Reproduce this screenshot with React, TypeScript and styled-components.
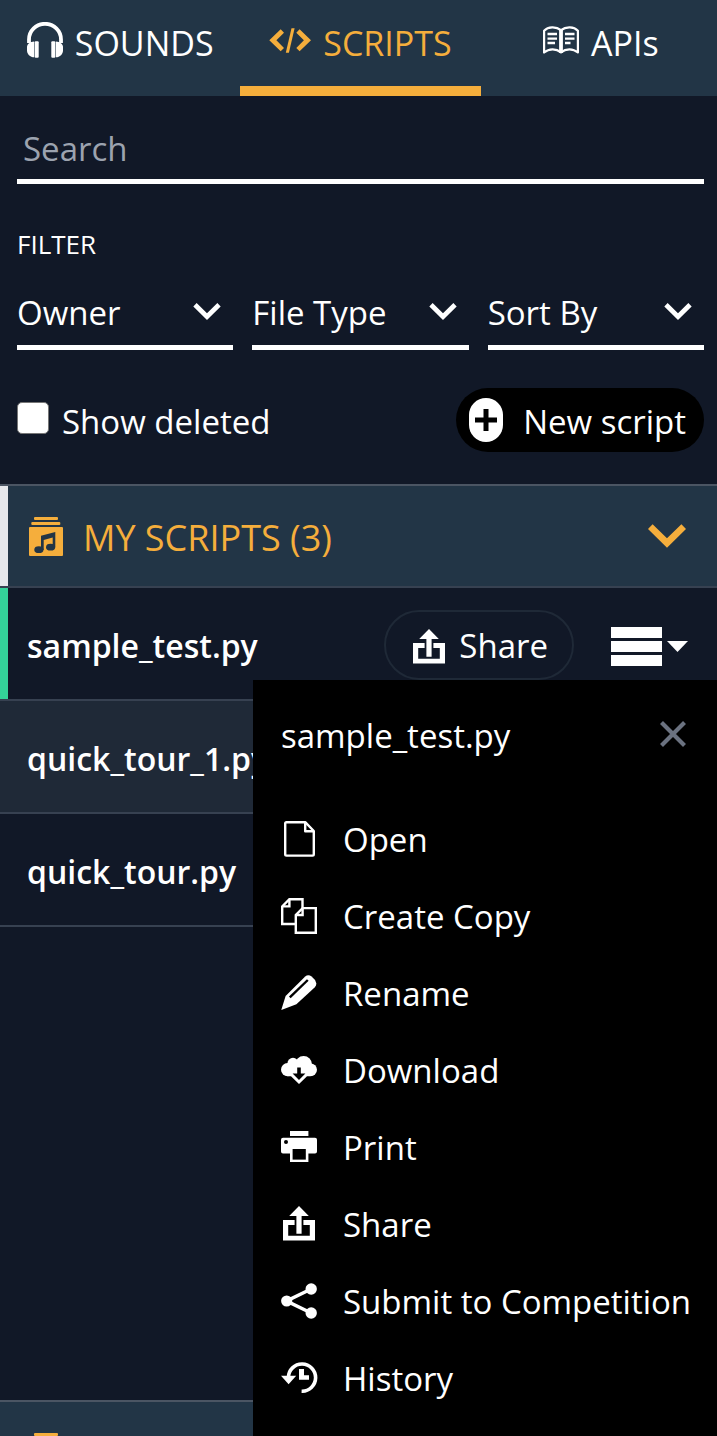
import React from 'react';
import styled, { createGlobalStyle } from 'styled-components';

const color = {
  page: '#111827',
  band: '#223546',
  amber: '#f5ae3c',
  rowAlt: '#1f2937',
  line: '#374151',
  lineTop: '#4b5563',
  muted: '#6b7280',
  placeholder: '#9ca3af',
  green: '#34d399',
};

const GlobalStyle = createGlobalStyle`
  *, *::before, *::after { box-sizing: border-box; }
  body {
    margin: 0;
    background: ${color.page};
    color: #fff;
    font-family: "Open Sans", "Noto Sans", sans-serif;
    font-size: 33px;
    line-height: 48px;
  }
  button, input, select { font: inherit; color: inherit; margin: 0; }
  button { border: 0; padding: 0; background: none; cursor: pointer; white-space: nowrap; }
  svg { display: block; flex: none; }
`;

const Page = styled.div`
  position: relative;
  display: flex;
  flex-direction: column;
  height: 100vh;
  overflow: hidden;
`;

const Tabs = styled.nav`
  display: grid;
  grid-template-columns: repeat(3, 1fr);
  flex: none;
  margin-right: -4px;
  background: ${color.band};
`;

const Tab = styled.button<{ $active?: boolean }>`
  display: flex;
  align-items: center;
  justify-content: center;
  gap: 12px;
  height: 96px;
  border-bottom: 10px solid ${(p) => (p.$active ? color.amber : 'transparent')};
  color: ${(p) => (p.$active ? color.amber : '#fff')};
  font-size: 34px;
  svg { margin-bottom: 6px; }
`;

const Controls = styled.div`
  flex: none;
  padding: 23px 13px 32px 17px;
`;

const SearchInput = styled.input`
  display: block;
  width: 100%;
  height: 65px;
  padding: 0 6px 2px;
  border: 0;
  border-bottom: 5px solid #fff;
  border-radius: 0;
  background: transparent;
  outline: none;
  &::placeholder { color: ${color.placeholder}; opacity: 1; }
`;

const FilterTitle = styled.div`
  margin: 40px 0 16px;
  font-size: 26px;
  line-height: 40px;
`;

const Filters = styled.div`
  display: grid;
  grid-template-columns: repeat(3, minmax(0, 1fr));
  gap: 19px;
`;

const SelectBox = styled.div`
  position: relative;
  border-bottom: 5px solid #fff;
  svg {
    position: absolute;
    top: 23px;
    right: 12px;
    pointer-events: none;
  }
`;

const Select = styled.select`
  display: block;
  width: 100%;
  height: 65px;
  padding: 0;
  border: 0;
  background: transparent;
  appearance: none;
  outline: none;
`;

const ActionsRow = styled.div`
  display: flex;
  align-items: center;
  justify-content: space-between;
  margin-top: 38px;
`;

const CheckLabel = styled.label`
  display: flex;
  align-items: center;
  gap: 13px;
  padding-top: 4px;
`;

const Checkbox = styled.input`
  appearance: none;
  width: 32px;
  height: 32px;
  margin-bottom: 8px;
  border: 1px solid #767676;
  border-radius: 5px;
  background: #fff;
`;

const NewScript = styled.button`
  display: flex;
  align-items: center;
  gap: 20px;
  height: 64px;
  padding: 4px 18px 0 13px;
  border-radius: 32px;
  background: #000;
`;

const PlusPill = styled.span`
  display: flex;
  align-items: center;
  justify-content: center;
  width: 34px;
  height: 44px;
  margin-bottom: 4px;
  border-radius: 17px;
  background: #fff;
`;

const SectionHeader = styled.button<{ $open?: boolean }>`
  display: flex;
  align-items: center;
  flex: none;
  gap: 20px;
  width: 100%;
  height: 104px;
  padding: 0 31px 0 29px;
  border-top: 2px solid ${color.lineTop};
  border-bottom: 2px solid ${color.line};
  background: ${color.band};
  box-shadow: ${(p) => (p.$open ? 'inset 8px 0 0 #e5e7eb' : 'none')};
  color: ${color.amber};
  font-size: 36px;
  text-align: left;
`;

const SectionTitle = styled.span`
  flex: 1;
  padding-top: 4px;
`;

const List = styled.ul`
  flex: 1;
  min-height: 0;
  margin: 0;
  padding: 0;
  list-style: none;
`;

const Row = styled.li<{ $alt?: boolean; $current?: boolean }>`
  display: flex;
  align-items: center;
  height: 113px;
  padding: 2px 29px 0 27px;
  border-bottom: 2px solid ${color.line};
  background: ${(p) => (p.$alt ? color.rowAlt : color.page)};
  box-shadow: ${(p) => (p.$current ? `inset 8px 0 0 ${color.green}` : 'none')};
`;

const FileName = styled.span`
  flex: 1;
  padding-top: 2px;
  font-size: 32px;
  font-weight: 600;
`;

const ShareButton = styled.button`
  display: flex;
  align-items: center;
  gap: 14px;
  height: 70px;
  padding: 3px 24px 0 27px;
  border: 2px solid ${color.rowAlt};
  border-radius: 35px;
`;

const MenuButton = styled.button`
  display: flex;
  align-items: center;
  gap: 5px;
  margin-left: 37px;
  padding-top: 3px;
`;

const NextSection = styled.div`
  flex: 0 0 36px;
  overflow: hidden;
`;

const Anchor = styled.div`
  position: relative;
  flex: none;
  height: 0;
`;

const Menu = styled.div`
  position: absolute;
  z-index: 1;
  top: 92px;
  right: 0;
  width: 464px;
  padding: 28px 0 20px;
  background: #000;
`;

const MenuHeader = styled.div`
  display: flex;
  align-items: center;
  justify-content: space-between;
  height: 56px;
  margin-bottom: 37px;
  padding: 0 31px 0 28px;
`;

const CloseButton = styled.button`
  padding-bottom: 4px;
`;

const MenuItem = styled.button`
  display: flex;
  align-items: center;
  gap: 26px;
  width: 100%;
  height: 77px;
  padding-left: 28px;
  text-align: left;
`;

const IconSlot = styled.span`
  display: flex;
  justify-content: center;
  flex: none;
  width: 36px;
  padding-bottom: 2px;
`;

const Headphones = () => (
  <svg width="36" height="36" viewBox="0 0 36 36" fill="currentColor">
    <path d="M2 21V17.5A16 15.7 0 0 1 34 17.5V21" fill="none" stroke="currentColor" strokeWidth="3.8" />
    <path d="M7.2 19.6V35.3C3 35.3 0 32 0 28.5V25C0 22.5 3 19.6 7.2 19.6Z" />
    <path d="M28.8 19.6V35.3C33 35.3 36 32 36 28.5V25C36 22.5 33 19.6 28.8 19.6Z" />
    <rect x="7.7" y="19.2" width="4" height="16.6" rx="1" />
    <rect x="24.3" y="19.2" width="4" height="16.6" rx="1" />
  </svg>
);

const Code = () => (
  <svg width="42" height="25" viewBox="0 0 42 25" fill="currentColor">
    <path d="M11.7 1.3 15 4.7 7.4 12.3 15 20 11.7 23.3.3 12.3Z" />
    <path d="M22.5.3H25.6L19.9 24.7H16.8Z" />
    <path d="M30.6 1.3 27.3 4.7 34.9 12.3 27.3 20 30.6 23.3 42 12.3Z" />
  </svg>
);

const Book = () => (
  <svg width="36" height="28" viewBox="0 0 36 28" fill="none" stroke="currentColor">
    <path d="M1.1 26.5V4.8C5 .5 13 .2 18 4.2 23 .2 31 .5 34.9 4.8V26.5C30 22.3 23 22.3 18 26.3 13 22.3 6 22.3 1.1 26.5Z" strokeWidth="2.2" strokeLinejoin="round" />
    <path d="M18 4V27" strokeWidth="3.8" />
    <path d="M4.5 8H14M4.5 12.6H14M4.5 17H12M22 8H31.5M22 12.6H31.5M22 17H27.5" strokeWidth="2.4" />
  </svg>
);

const Chevron = ({ width }: { width: number }) => (
  <svg width={width} height={Math.round((width * 17.4) / 28)} viewBox="0 0 28 17.4" fill="currentColor">
    <path d="M3.4 0 14 10.4 24.6 0 28 3.5 14 17.4 0 3.5Z" />
  </svg>
);

const Plus = () => (
  <svg width="22" height="22" viewBox="0 0 22 22">
    <path d="M11 0V22M0 11H22" stroke="#000" strokeWidth="5" />
  </svg>
);

const ScriptStack = () => (
  <svg width="34" height="39" viewBox="0 0 34 39" fill="currentColor">
    <rect x="5" y="0" width="24" height="3" rx="1" />
    <rect x="2.3" y="5" width="29" height="3" rx="1" />
    <rect x="0" y="10" width="34" height="29" rx="1" />
    <g fill={color.band}>
      <path d="M12 18.7 26.3 15V30H23.7V20.4L14.7 23V33H12Z" />
      <ellipse cx="9.9" cy="32.7" rx="4.6" ry="3.4" />
      <ellipse cx="21.6" cy="30.2" rx="4.6" ry="3.4" />
    </g>
  </svg>
);

const ShareUp = () => (
  <svg width="32" height="35" viewBox="0 0 32 35" fill="currentColor">
    <path d="M16 0 25.8 10H18.6V27.8H13.4V10H6.2Z" />
    <path d="M0 14H11.6V19H5.2V29.8H26.8V19H20.4V14H32V34.6H0Z" />
  </svg>
);

const Burger = () => (
  <svg width="51" height="39" viewBox="0 0 51 39" fill="currentColor">
    <path d="M0 0H51V11H0ZM0 14H51V25H0ZM0 28H51V39H0Z" />
  </svg>
);

const Caret = () => (
  <svg width="21" height="11" viewBox="0 0 21 11" fill="currentColor">
    <path d="M0 0H21L10.5 11Z" />
  </svg>
);

const Close = () => (
  <svg width="26" height="26" viewBox="0 0 26 26">
    <path d="M1.5 1.5 24.5 24.5M24.5 1.5 1.5 24.5" stroke={color.muted} strokeWidth="4.2" />
  </svg>
);

const FileIcon = () => (
  <svg width="31" height="36" viewBox="0 0 31 36" fill="none" stroke="currentColor" strokeWidth="2.4" strokeLinejoin="round">
    <path d="M2.5 1.2H21.2L29.8 10V33.3Q29.8 34.6 28.5 34.6H2.5Q1.2 34.6 1.2 33.3V2.5Q1.2 1.2 2.5 1.2Z" />
    <path d="M21.2 1.2V10.2H29.8" />
  </svg>
);

const CopyIcon = () => (
  <svg width="36" height="36" viewBox="0 0 36 36" fill="none" stroke="currentColor" strokeWidth="2.4">
    <path d="M14 26H1.2V8.4L8.4 1.2H21.5V10" />
    <path d="M8.4 1.2V8.4H1.2" />
    <path d="M14.8 34.7V17L21.6 10.1H34.8V34.7Z" />
    <path d="M21.6 10.1V17H14.8" />
  </svg>
);

const Pencil = () => (
  <svg width="36" height="36" viewBox="0 0 36 36" fill="currentColor">
    <path d="M.3 35 4.6 21 24.2 1.6Q27 -.8 30.6 1.4 34.4 4.2 35.3 8.2 35.5 10.6 33.6 12.4L15.4 29.2Z" />
    <path d="M8.8 22.4 26.8 5" fill="none" stroke="#000" strokeWidth="2.4" />
  </svg>
);

const CloudDown = () => (
  <svg width="36" height="28" viewBox="0 0 36 28" fill="currentColor">
    <circle cx="6.6" cy="13.6" r="6.6" />
    <circle cx="12" cy="7.4" r="5.6" />
    <circle cx="22.6" cy="8.4" r="8.4" />
    <circle cx="29.6" cy="13.8" r="6.4" />
    <path d="M6.6 8H29V20.2H26L18 28 10 20.2H6.6Z" />
    <path d="M16.2 11.4H19.8V17.6H24.4L18 24 11.6 17.6H16.2Z" fill="#000" />
  </svg>
);

const Printer = () => (
  <svg width="36" height="31" viewBox="0 0 36 31" fill="currentColor">
    <rect x="9" y="0" width="18.4" height="5" />
    <path d="M2 6.8H34Q36 6.8 36 8.8V20.6Q36 22.6 34 22.6H27.4V31H9V22.6H2Q0 22.6 0 20.6V8.8Q0 6.8 2 6.8Z" />
    <circle cx="5" cy="11" r="2" fill="#000" />
    <rect x="11.6" y="18" width="13.2" height="10.6" fill="#000" />
  </svg>
);

const Nodes = () => (
  <svg width="36" height="36" viewBox="0 0 36 36" fill="currentColor">
    <path d="M30.2 6 5.6 18 30.2 30" fill="none" stroke="currentColor" strokeWidth="3.6" />
    <circle cx="5.7" cy="18" r="5.6" />
    <circle cx="30.2" cy="6" r="5.7" />
    <circle cx="30.2" cy="30" r="5.7" />
  </svg>
);

const HistoryIcon = () => (
  <svg width="37" height="31" viewBox="0 0 37 31" fill="currentColor">
    <path d="M7.4 15.5A13.6 13.6 0 1 1 20.6 29.2" fill="none" stroke="currentColor" strokeWidth="3.6" />
    <path d="M0 13.8H15.2L7.6 22.3Z" />
    <path d="M18 7H23V13.3H28V17.8H18Z" />
  </svg>
);

const filters = ['Owner', 'File Type', 'Sort By'];

const menuItems: [string, React.ComponentType][] = [
  ['Open', FileIcon],
  ['Create Copy', CopyIcon],
  ['Rename', Pencil],
  ['Download', CloudDown],
  ['Print', Printer],
  ['Share', ShareUp],
  ['Submit to Competition', Nodes],
  ['History', HistoryIcon],
];

export default function App() {
  return (
    <>
      <GlobalStyle />
      <Page>
        <Tabs>
          <Tab><Headphones />SOUNDS</Tab>
          <Tab $active><Code />SCRIPTS</Tab>
          <Tab><Book />APIs</Tab>
        </Tabs>

        <Controls>
          <SearchInput type="text" placeholder="Search" aria-label="Search" />
          <FilterTitle>FILTER</FilterTitle>
          <Filters>
            {filters.map((name) => (
              <SelectBox key={name}>
                <Select aria-label={name}>
                  <option>{name}</option>
                </Select>
                <Chevron width={28} />
              </SelectBox>
            ))}
          </Filters>
          <ActionsRow>
            <CheckLabel>
              <Checkbox type="checkbox" />
              Show deleted
            </CheckLabel>
            <NewScript>
              <PlusPill><Plus /></PlusPill>
              New script
            </NewScript>
          </ActionsRow>
        </Controls>

        <SectionHeader $open aria-expanded="true">
          <ScriptStack />
          <SectionTitle>MY SCRIPTS (3)</SectionTitle>
          <Chevron width={38} />
        </SectionHeader>

        <Anchor>
          <Menu role="menu">
            <MenuHeader>
              sample_test.py
              <CloseButton aria-label="Close"><Close /></CloseButton>
            </MenuHeader>
            {menuItems.map(([label, Icon]) => (
              <MenuItem key={label} role="menuitem">
                <IconSlot><Icon /></IconSlot>
                {label}
              </MenuItem>
            ))}
          </Menu>
        </Anchor>

        <List>
          <Row $current>
            <FileName>sample_test.py</FileName>
            <ShareButton><ShareUp />Share</ShareButton>
            <MenuButton aria-label="Script menu"><Burger /><Caret /></MenuButton>
          </Row>
          <Row $alt>
            <FileName>quick_tour_1.py</FileName>
          </Row>
          <Row>
            <FileName>quick_tour.py</FileName>
          </Row>
        </List>

        <NextSection>
          <SectionHeader aria-label="Shared scripts">
            <ScriptStack />
          </SectionHeader>
        </NextSection>
      </Page>
    </>
  );
}
